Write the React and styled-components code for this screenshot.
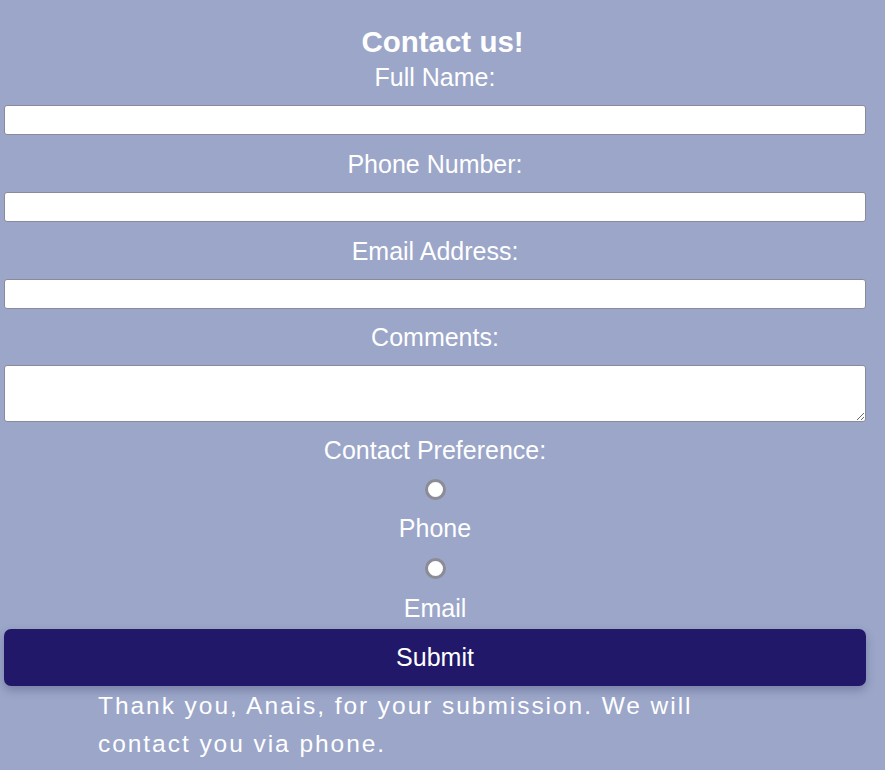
import React, { useState } from "react";
import styled, { createGlobalStyle } from "styled-components";

const Global = createGlobalStyle`
  html, body {
    margin: 0;
    padding: 0;
    background: #9ba6c9;
    font-family: "Liberation Sans", Arial, sans-serif;
    color: #ffffff;
  }
`;

const Form = styled.form`
  display: flex;
  flex-direction: column;
  align-items: center;
  width: 862px;
  margin: 0 0 0 4px;
  padding-top: 25px;
`;

const Heading = styled.h2`
  font-size: 29.5px;
  font-weight: 700;
  margin: 0 0 4px 15px;
`;

const Label = styled.label`
  font-size: 25px;
  margin: ${(p) => p.$top || "15px"} 0 13px 0;
`;

const Field = styled.input`
  box-sizing: border-box;
  width: 100%;
  height: 30px;
  border: 1px solid #8a8a9a;
  border-radius: 3px;
  background: #fff;
  margin: 0;
`;

const Comments = styled.textarea`
  box-sizing: border-box;
  width: 100%;
  height: 57px;
  border: 1px solid #8a8a9a;
  border-radius: 3px;
  background: #fff;
  margin: 0;
`;

const Radio = styled.input`
  appearance: none;
  box-sizing: border-box;
  width: 21px;
  height: 21px;
  margin: ${(p) => p.$top} 0 0 0;
  border: 3px solid #8c8c96;
  border-radius: 50%;
  background: #fff;
`;

const Option = styled.label`
  font-size: 25px;
  margin: ${(p) => p.$top} 0 0 0;
`;

const Submit = styled.button`
  width: 100%;
  height: 57px;
  margin-top: 6px;
  border: none;
  border-radius: 7px;
  background: #221869;
  color: #fff;
  font-family: "Liberation Sans", Arial, sans-serif;
  font-size: 25px;
  box-shadow: 0 4px 10px rgba(40, 40, 80, 0.3);
`;

const Thanks = styled.p`
  align-self: flex-start;
  width: 620px;
  margin: 1px 0 0 94px;
  font-size: 24.5px;
  line-height: 38.4px;
  letter-spacing: 1.95px;
`;

export default function App() {
  const [pref] = useState("");
  return (
    <>
      <Global />
      <Form onSubmit={(e) => e.preventDefault()}>
        <Heading>Contact us!</Heading>
        <Label $top="0">Full Name:</Label>
        <Field type="text" />
        <Label>Phone Number:</Label>
        <Field type="tel" />
        <Label>Email Address:</Label>
        <Field type="email" />
        <Label $top="14px">Comments:</Label>
        <Comments />
        <Label $top="14px">Contact Preference:</Label>
        <Radio type="radio" name="pref" value="phone" $top="1px" defaultChecked={pref === "phone"} />
        <Option $top="14px">Phone</Option>
        <Radio type="radio" name="pref" value="email" $top="15px" defaultChecked={pref === "email"} />
        <Option $top="15px">Email</Option>
        <Submit type="submit">Submit</Submit>
        <Thanks>
          Thank you, Anais, for your submission. We will contact you via phone.
        </Thanks>
      </Form>
    </>
  );
}
